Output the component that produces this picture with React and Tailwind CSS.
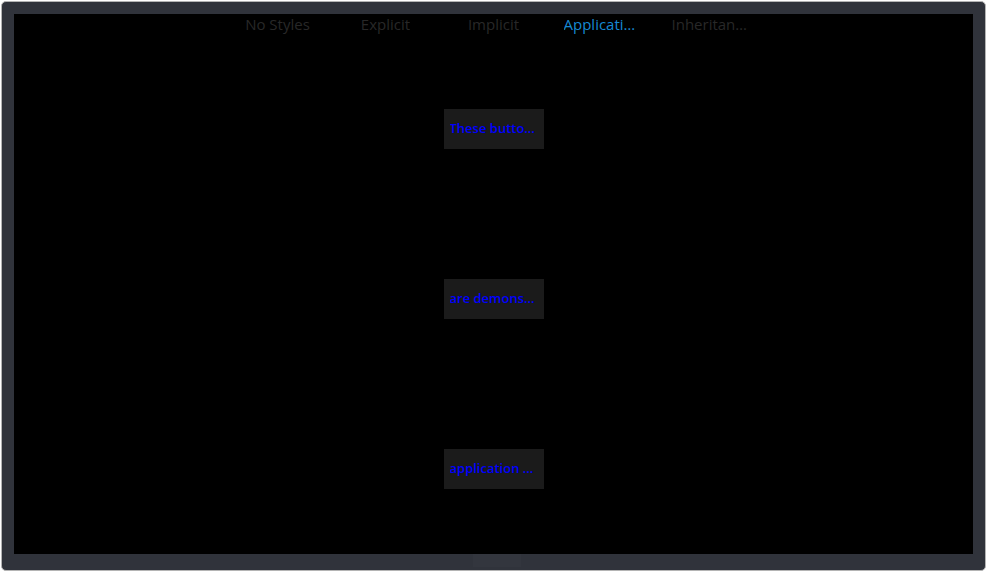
import React, { useState } from "react";

const tabs = ["No Styles", "Explicit", "Implicit", "Application", "Inheritance"];

const buttons = ["These buttons", "are demonstrating", "application resources"];

export default function App() {
	const [active, setActive] = useState(3);

	return (
		<div
			className="w-[987px] h-[572px] bg-white p-[1px]"
			style={{ fontFamily: '"Open Sans", "Noto Sans", sans-serif' }}
		>
			<div className="w-full h-full rounded-[5px] border border-[#b4b4b4] bg-[#30333b] p-[12px] pb-[16px] flex flex-col">
				<div className="flex-1 bg-black flex flex-col">
					{/* Onglets */}
					<div className="h-[30px] flex justify-center">
						{tabs.map((t, i) => (
							<button
								key={t}
								onClick={() => setActive(i)}
								className={`w-[108px] px-[8px] h-full flex justify-center items-start text-[15px] leading-[20px] ${
									i === active ? "text-[#1689d3]" : "text-[#282828]"
								}`}
							>
								<span className="block truncate max-w-[76px]">{t}</span>
							</button>
						))}
					</div>

					{/* Boutons */}
					<div className="flex-1 grid grid-rows-3">
						{buttons.map((b) => (
							<div key={b} className="flex items-center justify-center">
								<div className="w-[100px] h-[40px] bg-[#1b1b1b] flex items-center justify-center px-[6px]">
									<span className="block truncate text-[13px] font-semibold text-[#0000ff]">
										{b}
									</span>
								</div>
							</div>
						))}
					</div>
				</div>
				<div className="h-0 relative">
					<div className="absolute left-[459px] top-0 w-[48px] h-[13px] bg-[#33363e]" />
				</div>
			</div>
		</div>
	);
}
